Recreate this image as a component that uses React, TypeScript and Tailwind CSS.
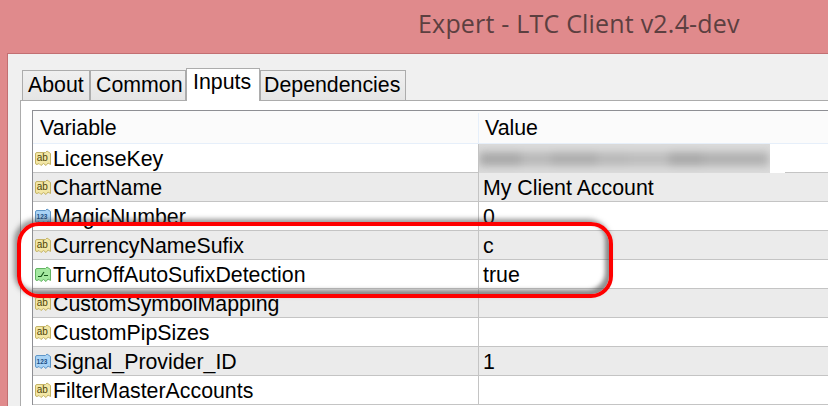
const ROWS = [
  { name: "LicenseKey", icon: "ab", value: "", blurred: true },
  { name: "ChartName", icon: "ab", value: "My Client Account" },
  { name: "MagicNumber", icon: "123", value: "0" },
  { name: "CurrencyNameSufix", icon: "ab", value: "c" },
  { name: "TurnOffAutoSufixDetection", icon: "bool", value: "true" },
  { name: "CustomSymbolMapping", icon: "ab", value: "" },
  { name: "CustomPipSizes", icon: "ab", value: "" },
  { name: "Signal_Provider_ID", icon: "123", value: "1" },
  { name: "FilterMasterAccounts", icon: "ab", value: "" },
];

const SMEARS = [
  { width: 42, shade: "bg-[#a8a8a8]" },
  { width: 30, shade: "bg-[#b8b8b8]" },
  { width: 46, shade: "bg-[#adadad]" },
  { width: 32, shade: "bg-[#b8b8b8]" },
  { width: 40, shade: "bg-[#bcbcbc]" },
  { width: 34, shade: "bg-[#a8a8a8]" },
  { width: 66, shade: "bg-[#b0b0b0]" },
];

function VarIcon({ kind }: { kind: string }) {
  const fill = kind === "ab" ? "#f3e7a6" : kind === "123" ? "#a9d3f5" : "#a4e8a0";
  const stroke = kind === "ab" ? "#c4b468" : kind === "123" ? "#5f96c8" : "#62b462";
  return (
    <svg width="16" height="17" viewBox="0 0 16 17" className="shrink-0">
      <path
        d="M2 2.5 H10.5 L12 1 L15.5 3.5 V14.5 L13 13 L11 15.5 L8.5 13.5 L6 15.5 L4 13.5 L2 14.5 Q0.5 14.5 0.5 13 V4 Q0.5 2.5 2 2.5 Z"
        fill={fill}
        stroke={stroke}
      />
      {kind === "ab" && (
        <text x="1.8" y="11" fontSize="10" fontFamily="Liberation Sans" fill="#4f4508">
          ab
        </text>
      )}
      {kind === "123" && (
        <text x="1.6" y="11" fontSize="6.5" fontWeight="700" fontFamily="Liberation Sans" fill="#1c4f86">
          123
        </text>
      )}
      {kind === "bool" && <path d="M3 10.5 L6 10.5 L9 6 M9 9.5 H13" fill="none" stroke="#14551a" strokeWidth="1.2" />}
    </svg>
  );
}

const TAB_CLASS = "flex h-[30px] items-center border border-b-0 border-[#acacac] bg-gradient-to-b from-[#f0f0f0] to-[#e5e5e5] pt-px";

export default function App() {
  return (
    <div className="relative h-[406px] w-[828px] overflow-hidden bg-[#e08a8c] font-['Liberation_Sans',sans-serif] text-black">
      <div className="flex h-[53px] items-center pb-[5px] pl-[418px] font-['Open_Sans',sans-serif] text-[25px] tracking-[0.2px] text-[#5c3f40]">
        Expert - LTC Client v2.4-dev
      </div>
      <div className="ml-[7px] h-[353px] border-t border-l border-[#c26f72] bg-[#f0f0f0] pl-[12px] pt-[15px]">
        <div className="flex h-[31px] items-end pl-[2px] text-[21.33px]">
          <div className={`${TAB_CLASS} w-[68px] pl-[5px]`}>About</div>
          <div className={`${TAB_CLASS} w-[96px] pl-[5px]`}>Common</div>
          <div className="z-10 -mb-px flex h-[33px] w-[74px] items-start border border-b-0 border-[#acacac] bg-white pl-[6px] leading-[26px]">
            Inputs
          </div>
          <div className={`${TAB_CLASS} w-[146px] pl-[3px]`}>Dependencies</div>
        </div>
        <div className="h-[308px] border-t border-l border-[#acacac] bg-white pl-[11px] pt-[9px]">
          <div className="border-t border-l border-[#8e8f94] text-[21.33px]">
            <div className="flex h-[33px] items-center border-b border-[#e6effa] bg-[#fbfbfb] pt-[3px]">
              <div className="w-[446px] border-r border-[#e6effa] pl-[7px]">Variable</div>
              <div className="pl-[6px]">Value</div>
            </div>
            {ROWS.map((row, index) => (
              <div
                key={row.name}
                className={`flex h-[29px] border-b border-[#c4c4c4] ${index % 2 === 1 ? "bg-[#ebebeb]" : "bg-white"}`}
              >
                <div className="flex w-[446px] items-center gap-[2px] border-r border-[#c4c4c4] pl-[2px]">
                  <VarIcon kind={row.icon} />
                  <span className="whitespace-nowrap pt-[3px]">{row.name}</span>
                </div>
                {row.blurred ? (
                  <div className="flex h-[29px] w-[306px] overflow-hidden bg-white">
                    <div className="flex h-[29px] w-[291px] items-center overflow-hidden bg-[#dcdcdc]">
                      <div className="flex h-[14px] w-[290px] blur-[4px]">
                        {SMEARS.map((smear) => (
                          <div key={smear.width} className={`h-full ${smear.shade}`} style={{ width: smear.width }} />
                        ))}
                      </div>
                    </div>
                  </div>
                ) : (
                  <div className="flex items-center pl-[4px] pt-[3px]">{row.value}</div>
                )}
              </div>
            ))}
          </div>
        </div>
      </div>
      <div className="absolute left-[17px] top-[222px] h-[76px] w-[596px] rounded-[22px] border-[4px] border-[#fe0000] shadow-[inset_-4px_-4px_4px_rgba(70,70,70,0.6),-3px_-3px_5px_rgba(70,70,70,0.55)]" />
    </div>
  );
}
